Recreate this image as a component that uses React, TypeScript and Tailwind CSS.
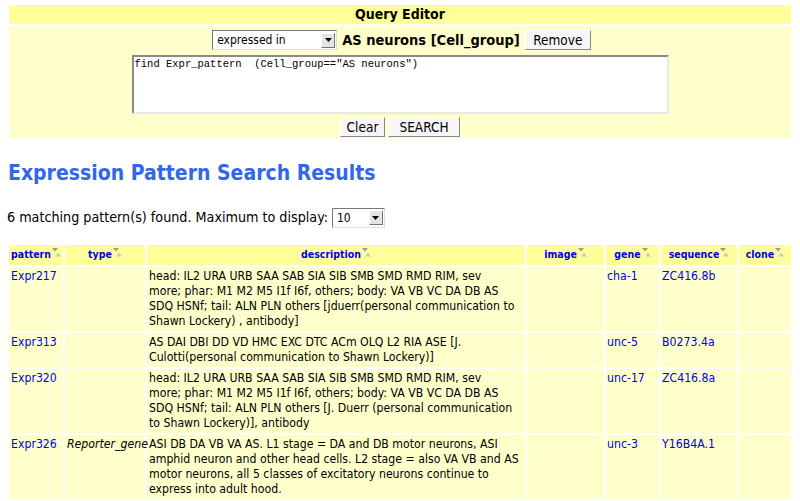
import React from 'react';

// Query editor + expression pattern results page

type Row = {
  pattern: string;
  type?: string;
  lines: string[];
  gene: string;
  sequence: string;
};

const ROWS: Row[] = [
  {
    pattern: 'Expr217',
    lines: [
      'head: IL2 URA URB SAA SAB SIA SIB SMB SMD RMD RIM, sev',
      'more; phar: M1 M2 M5 I1f I6f, others; body: VA VB VC DA DB AS',
      'SDQ HSNf; tail: ALN PLN others [jduerr(personal communication to',
      'Shawn Lockery) , antibody]',
    ],
    gene: 'cha-1',
    sequence: 'ZC416.8b',
  },
  {
    pattern: 'Expr313',
    lines: [
      'AS DAI DBI DD VD HMC EXC DTC ACm OLQ L2 RIA ASE [J.',
      'Culotti(personal communication to Shawn Lockery)]',
    ],
    gene: 'unc-5',
    sequence: 'B0273.4a',
  },
  {
    pattern: 'Expr320',
    lines: [
      'head: IL2 URA URB SAA SAB SIA SIB SMB SMD RMD RIM, sev',
      'more; phar: M1 M2 M5 I1f I6f, others; body: VA VB VC DA DB AS',
      'SDQ HSNf; tail: ALN PLN others [J. Duerr (personal communication',
      'to Shawn Lockery)], antibody',
    ],
    gene: 'unc-17',
    sequence: 'ZC416.8a',
  },
  {
    pattern: 'Expr326',
    type: 'Reporter_gene',
    lines: [
      'ASI DB DA VB VA AS. L1 stage = DA and DB motor neurons, ASI',
      'amphid neuron and other head cells. L2 stage = also VA VB and AS',
      'motor neurons, all 5 classes of excitatory neurons continue to',
      'express into adult hood.',
    ],
    gene: 'unc-3',
    sequence: 'Y16B4A.1',
  },
];

const COLS = [
  { key: 'pattern', w: 'w-[54px]' },
  { key: 'type', w: 'w-[80px]' },
  { key: 'description', w: 'w-[378px]' },
  { key: 'image', w: 'w-[77px]' },
  { key: 'gene', w: 'w-[53px]' },
  { key: 'sequence', w: 'w-[76px]' },
  { key: 'clone', w: 'w-[52px]' },
];

const COND = '"DejaVu Sans Condensed", "DejaVu Sans", sans-serif';

function SortIcon() {
  return (
    <svg width="9" height="9" viewBox="0 0 9 9" className="inline-block ml-[1px] -mt-[5px]">
      <path d="M0 0 L6 0 L3 3.5 Z" fill="#9a9a9a" />
      <path d="M3 8.5 L6 4.5 L9 8.5 Z" fill="#c8c8c8" />
    </svg>
  );
}

function SelectArrow() {
  return (
    <span className="w-[14px] h-[15px] bg-[#e4e4e4] border border-t-white border-l-white border-r-[#777] border-b-[#777] flex items-center justify-center">
      <svg width="7" height="4" viewBox="0 0 7 4">
        <path d="M0 0 L7 0 L3.5 4 Z" fill="#000" />
      </svg>
    </span>
  );
}

function Button({ children, className = '' }: { children: React.ReactNode; className?: string }) {
  return (
    <span
      className={`inline-flex items-center justify-center h-[20px] bg-[#f6f6f6] text-black border border-t-white border-l-white border-r-[#888] border-b-[#888] text-[13.5px] ${className}`}
      style={{ fontFamily: COND }}
    >
      {children}
    </span>
  );
}

export default function App() {
  return (
    <div className="w-[800px] h-[501px] overflow-hidden bg-white text-black" style={{ fontFamily: COND }}>
      {/* ── Query editor ── */}
      <div className="px-[9px] pt-[5px] flex flex-col gap-[2px]">
        <div className="h-[19px] bg-[#ffff99] flex items-center justify-center text-[14px] font-bold">
          Query Editor
        </div>
        <div className="h-[112px] bg-[#ffffcc] flex flex-col items-center pt-[4px]">
          <div className="flex items-center h-[20px] gap-[5px] ml-[3px]">
            <div className="w-[125px] h-[20px] bg-white border border-t-[#777] border-l-[#777] border-r-[#ddd] border-b-[#ddd] flex items-center justify-between pl-[4px] pr-[1px]">
              <span className="text-[12px] leading-none">expressed in</span>
              <SelectArrow />
            </div>
            <span className="text-[14.5px] font-bold leading-none">AS neurons [Cell_group]</span>
            <Button className="w-[66px]">Remove</Button>
          </div>
          <div className="mt-[5px] w-[537px] h-[59px] bg-white border-2 border-t-[#8a8a8a] border-l-[#8a8a8a] border-r-[#e8e8e8] border-b-[#e8e8e8] px-[1px] pt-[1px]">
            <div
              className="text-[10.5px] leading-[13px] whitespace-pre"
              style={{ fontFamily: '"Liberation Mono", "DejaVu Sans Mono", monospace' }}
            >
              {'find Expr_pattern  (Cell_group=="AS neurons")'}
            </div>
          </div>
          <div className="mt-[3px] flex gap-[3px]">
            <Button className="w-[45px]">Clear</Button>
            <Button className="w-[72px]">SEARCH</Button>
          </div>
        </div>
      </div>

      {/* ── Results heading ── */}
      <h1 className="mt-[21px] ml-[8px] text-[21px] leading-[28px] font-bold text-[#3366ee]">
        Expression Pattern Search Results
      </h1>

      <div className="mt-[20px] ml-[7px] flex items-center text-[14.2px] gap-[4px]">
        <span>6 matching pattern(s) found. Maximum to display:</span>
        <div className="w-[53px] h-[20px] bg-white border border-t-[#777] border-l-[#777] border-r-[#ddd] border-b-[#ddd] flex items-center justify-between pl-[4px] pr-[1px]">
          <span className="text-[12px] leading-none">10</span>
          <SelectArrow />
        </div>
      </div>

      {/* ── Results table ── */}
      <table className="mt-[15px] ml-[7px] w-[786px] border-separate border-spacing-[2px] table-fixed">
        <colgroup>
          {COLS.map((c) => (
            <col key={c.key} className={c.w} />
          ))}
        </colgroup>
        <thead>
          <tr>
            {COLS.map((c) => (
              <th
                key={c.key}
                className="h-[20px] p-0 bg-[#ffff99] text-[10.5px] font-bold text-[#0000ee] text-center align-middle whitespace-nowrap"
              >
                {c.key}
                <SortIcon />
              </th>
            ))}
          </tr>
        </thead>
        <tbody className="text-[12.2px] leading-[15px]">
          {ROWS.map((r) => (
            <tr key={r.pattern}>
              <td className="bg-[#ffffcc] align-top px-[2px] py-[2px] text-[#0000ee]">{r.pattern}</td>
              <td className="bg-[#ffffcc] align-top px-[2px] py-[2px] italic whitespace-nowrap">
                {r.type ?? ''}
              </td>
              <td className="bg-[#ffffcc] align-top px-[2px] py-[2px] whitespace-nowrap">
                {r.lines.map((l, i) => (
                  <div key={i}>{l}</div>
                ))}
              </td>
              <td className="bg-[#ffffcc]" />
              <td className="bg-[#ffffcc] align-top px-[1px] py-[2px] text-[#0000ee]">{r.gene}</td>
              <td className="bg-[#ffffcc] align-top px-[1px] py-[2px] text-[#0000ee]">{r.sequence}</td>
              <td className="bg-[#ffffcc]" />
            </tr>
          ))}
        </tbody>
      </table>
    </div>
  );
}
